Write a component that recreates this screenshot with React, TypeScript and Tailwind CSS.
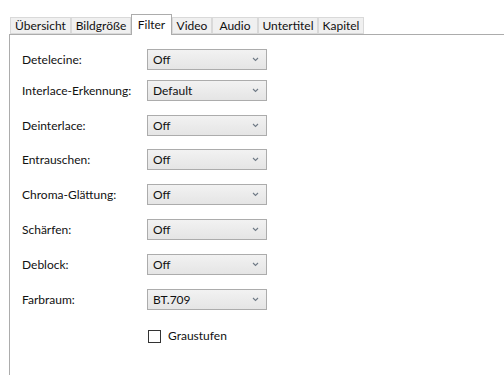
import React from 'react';

const tabs = [
  { label: 'Übersicht', w: 'w-[61px]' },
  { label: 'Bildgröße', w: 'w-[60px]' },
  { label: 'Filter', w: 'w-[41px]', active: true },
  { label: 'Video', w: 'w-[40px]' },
  { label: 'Audio', w: 'w-[46px]' },
  { label: 'Untertitel', w: 'w-[60px]' },
  { label: 'Kapitel', w: 'w-[46px]' },
];

const rows = [
  { label: 'Detelecine:', value: 'Off', mt: 'mt-0' },
  { label: 'Interlace-Erkennung:', value: 'Default', mt: 'mt-[10px]' },
  { label: 'Deinterlace:', value: 'Off', mt: 'mt-[14px]' },
  { label: 'Entrauschen:', value: 'Off', mt: 'mt-[13px]' },
  { label: 'Chroma-Glättung:', value: 'Off', mt: 'mt-[14px]' },
  { label: 'Schärfen:', value: 'Off', mt: 'mt-[14px]' },
  { label: 'Deblock:', value: 'Off', mt: 'mt-[14px]' },
  { label: 'Farbraum:', value: 'BT.709', mt: 'mt-[14px]' },
];

const Chevron: React.FC = () => (
  <svg width="7" height="5" viewBox="0 0 7 5" className="shrink-0">
    <path d="M1 1 L3.5 3.5 L6 1" fill="none" stroke="#6f7a86" strokeWidth="1.1" />
  </svg>
);

const Select: React.FC<{ value: string }> = ({ value }) => (
  <div className="w-[120px] h-[21px] flex items-center justify-between pl-[5px] pr-[7px] border border-[#acacac] bg-gradient-to-b from-[#f2f2f2] to-[#e5e5e5]">
    <span>{value}</span>
    <Chevron />
  </div>
);

export default function App() {
  return (
    <div className="w-[504px] h-[375px] overflow-hidden bg-white text-[12px] leading-[16px] text-[#111] font-['Segoe_UI','Lato',sans-serif]">
      <div className="flex items-end pt-[14px] pl-[10px] relative z-10">
        {tabs.map((t) =>
          t.active ? (
            <div
              key={t.label}
              className={`${t.w} h-[21px] -mb-px flex items-start justify-center pt-[2px] bg-white border border-b-0 border-[#acacac]`}
            >
              {t.label}
            </div>
          ) : (
            <div
              key={t.label}
              className={`${t.w} h-[17px] flex items-center justify-center bg-[#f0f0f0] border border-[#d9d9d9]`}
            >
              {t.label}
            </div>
          )
        )}
      </div>
      <div className="ml-[9px] h-[341px] border-l border-t border-[#acacac] pl-[12px] pt-[14px]">
        {rows.map((r) => (
          <div key={r.label} className={`flex items-center ${r.mt}`}>
            <div className="w-[125px]">{r.label}</div>
            <Select value={r.value} />
          </div>
        ))}
        <div className="flex items-center mt-[18px] ml-[126px]">
          <div className="w-[13px] h-[13px] border border-[#333333] bg-white" />
          <span className="ml-[7px]">Graustufen</span>
        </div>
      </div>
    </div>
  );
}
